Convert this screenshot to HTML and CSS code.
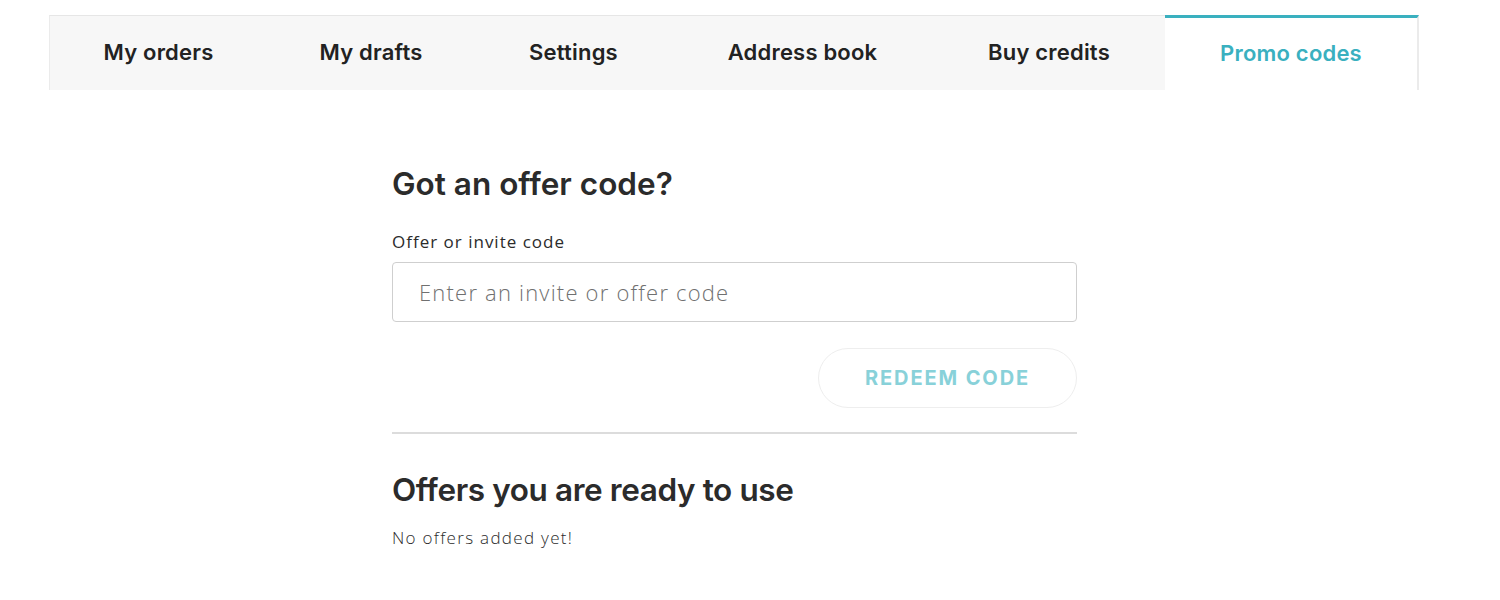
FILE: index.html
```html
<!DOCTYPE html>
<html>
<head>
<meta charset="utf-8">
<link rel="stylesheet" href="styles.css">
</head>
<body>
<nav class="tabs">
  <a class="tab">My orders</a>
  <a class="tab">My drafts</a>
  <a class="tab">Settings</a>
  <a class="tab">Address book</a>
  <a class="tab">Buy credits</a>
  <a class="tab active">Promo codes</a>
</nav>
<main class="content">
  <h2 class="heading">Got an offer code?</h2>
  <label class="label" for="code">Offer or invite code</label>
  <input class="input" id="code" type="text" placeholder="Enter an invite or offer code">
  <div class="actions">
    <button class="btn">REDEEM CODE</button>
  </div>
  <hr class="divider">
  <h2 class="heading second">Offers you are ready to use</h2>
  <p class="empty">No offers added yet!</p>
</main>
</body>
</html>
```
FILE: styles.css
```css
* { box-sizing: border-box; }
body {
  margin: 0;
  font-family: Inter, "Open Sans", sans-serif;
  color: #2b2b2b;
  background: #fff;
}
.tabs {
  display: grid;
  grid-template-columns: 217px 208px 197px 261px 232px 254px;
  margin: 15px 0 0 49px;
  width: 1370px;
  background: #f7f7f7;
  border-top: 1px solid #e6e6e6;
  border-left: 1px solid #ebebeb;
  height: 75px;
}
.tab {
  display: flex;
  align-items: center;
  justify-content: center;
  padding-bottom: 2px;
  font-size: 22px;
  font-weight: 600;
  color: #222;
  letter-spacing: 0.2px;
  white-space: nowrap;
}
.tab.active {
  background: #fff;
  color: #3ab0bf;
  border-top: 3px solid #3ab0bf;
  margin-top: -1px;
  border-right: 2px solid #ebebeb;
}
.content {
  width: 685px;
  margin: 0 0 0 392px;
  padding-top: 76px;
  display: flex;
  flex-direction: column;
}
.heading {
  margin: 0;
  font-size: 31.5px;
  font-weight: 600;
  color: #2b2b2b;
  letter-spacing: 0;
  line-height: 36px;
}
.label {
  margin-top: 28px;
  font-size: 17px;
  font-family: "Open Sans", sans-serif;
  color: #2b2b2b;
  letter-spacing: 1px;
  line-height: 24px;
}
.input {
  margin-top: 8px;
  height: 60px;
  border: 1px solid #cfcfcf;
  border-radius: 4px;
  padding: 0 26px;
  font-family: "Open Sans", sans-serif;
  font-size: 22px;
  font-weight: 300;
  letter-spacing: 1.2px;
  color: #333;
}
.input::placeholder { color: #707070; }
.actions {
  display: flex;
  justify-content: flex-end;
  margin-top: 26px;
}
.btn {
  width: 259px;
  height: 60px;
  border: 1px solid #eeeeee;
  border-radius: 30px;
  background: #fff;
  font-family: Inter, sans-serif;
  font-size: 20px;
  font-weight: 700;
  letter-spacing: 1.9px;
  color: #88d1d9;
}
.divider {
  margin: 24px 0 0 0;
  border: 0;
  border-top: 2px solid #dcdcdc;
  width: 685px;
}
.second {
  margin-top: 38px;
  letter-spacing: -0.4px;
}
.empty {
  margin: 18px 0 0 0;
  font-family: "Open Sans", sans-serif;
  font-weight: 300;
  font-size: 17px;
  letter-spacing: 1.3px;
  color: #2b2b2b;
}
```
